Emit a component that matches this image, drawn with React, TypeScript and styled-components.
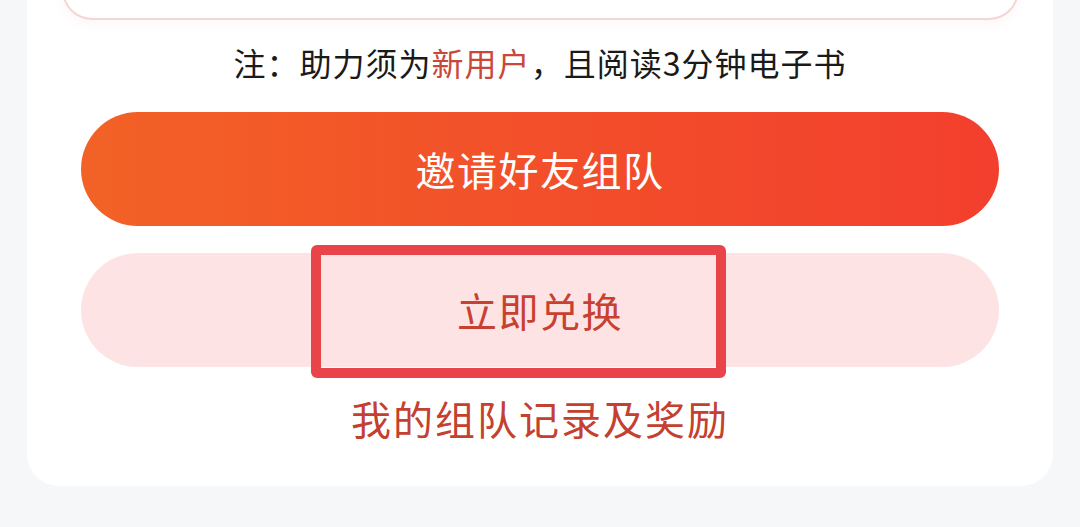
import styled, { createGlobalStyle } from "styled-components"

const GlobalStyle = createGlobalStyle`
  html, body {
    margin: 0;
    padding: 0;
    background: #f6f7f9;
    font-family: "Noto Sans CJK SC", "Noto Sans", sans-serif;
  }
  #root {
    height: 527px;
    overflow: hidden;
  }
`

const Page = styled.div`
  padding: 0 27px;
`

const Card = styled.div`
  background: #fff;
  border-radius: 0 0 32px 32px;
  padding: 0 54px 44px;
  display: flex;
  flex-direction: column;
  align-items: stretch;
`

const PrizeBox = styled.div`
  height: 60px;
  margin: -42px -20px 0 -19px;
  border: 2px solid #f4d6d3;
  border-top: none;
  border-radius: 0 0 30px 30px;
  box-shadow: 0 6px 10px rgba(240, 200, 200, 0.12);
`

const Note = styled.p`
  margin: 22px 0 0;
  text-align: center;
  font-size: 32px;
  line-height: 40px;
  color: #1a1a1a;
  letter-spacing: 1px;
`

const Hl = styled.span`
  color: #c9483a;
`

const Pill = styled.button<{ $variant: "primary" | "soft" }>`
  display: flex;
  align-items: center;
  justify-content: center;
  height: 114px;
  width: 100%;
  border: none;
  border-radius: 57px;
  font-family: inherit;
  font-size: 40px;
  letter-spacing: 1.5px;
  padding: 0;
  background: ${p =>
    p.$variant === "primary"
      ? "linear-gradient(90deg, #f26226 0%, #f24f2a 50%, #f33f2e 100%)"
      : "#fde3e4"};
  color: ${p => (p.$variant === "primary" ? "#fff" : "#c8402f")};
`

const Invite = styled(Pill)`
  margin-top: 30px;
`

const RedeemWrap = styled.div`
  position: relative;
  margin-top: 27px;
`

const Marker = styled.div`
  position: absolute;
  left: 230px;
  top: -8px;
  width: 415px;
  height: 133px;
  box-sizing: border-box;
  border: 10px solid #e8444a;
  border-radius: 6px;
  pointer-events: none;
`

const RecordLink = styled.a`
  margin-top: 27px;
  text-align: center;
  font-size: 40px;
  line-height: 48px;
  color: #c4402f;
  letter-spacing: 2px;
`

function App() {
  return (
    <Page>
      <GlobalStyle />
      <Card>
        <PrizeBox />
        <Note>
          注：助力须为<Hl>新用户</Hl>，且阅读3分钟电子书
        </Note>
        <Invite $variant="primary">邀请好友组队</Invite>
        <RedeemWrap>
          <Pill $variant="soft">立即兑换</Pill>
          <Marker />
        </RedeemWrap>
        <RecordLink>我的组队记录及奖励</RecordLink>
      </Card>
    </Page>
  )
}

export default App
